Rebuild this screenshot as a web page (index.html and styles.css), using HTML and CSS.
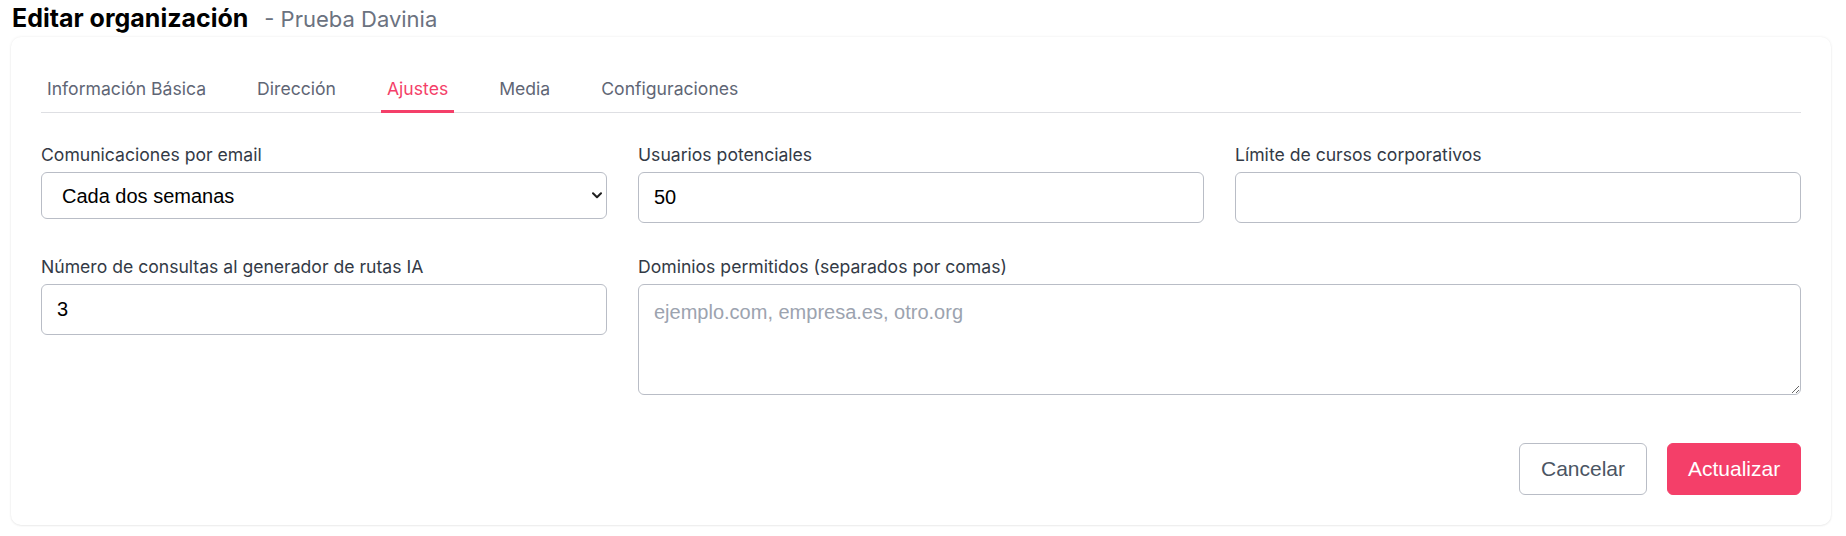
FILE: index.html
```html
<!DOCTYPE html>
<html lang="es">
<head>
<meta charset="utf-8">
<title>Editar organización</title>
<link rel="stylesheet" href="styles.css">
</head>
<body>
<div class="page">
  <h1 class="page-title">Editar organización <span class="page-sub">- Prueba Davinia</span></h1>
  <div class="card">
    <nav class="tabs">
      <button class="tab">Información Básica</button>
      <button class="tab">Dirección</button>
      <button class="tab active">Ajustes</button>
      <button class="tab">Media</button>
      <button class="tab">Configuraciones</button>
    </nav>
    <form class="form-grid">
      <div class="field">
        <label class="label">Comunicaciones por email</label>
        <div class="select-wrap">
          <select class="select">
            <option>Cada dos semanas</option>
          </select>
          <svg class="select-arrow" width="10" height="7" viewBox="0 0 10 7" aria-hidden="true"><polyline points="1,1.2 5,5.2 9,1.2" fill="none" stroke="#1f1f1f" stroke-width="2" stroke-linecap="round" stroke-linejoin="round"/></svg>
        </div>
      </div>
      <div class="field">
        <label class="label">Usuarios potenciales</label>
        <input class="input" type="text" value="50">
      </div>
      <div class="field">
        <label class="label">Límite de cursos corporativos</label>
        <input class="input" type="text" value="">
      </div>
      <div class="field">
        <label class="label">Número de consultas al generador de rutas IA</label>
        <input class="input" type="text" value="3">
      </div>
      <div class="field span-2">
        <label class="label">Dominios permitidos (separados por comas)</label>
        <textarea class="textarea" placeholder="ejemplo.com, empresa.es, otro.org"></textarea>
      </div>
    </form>
    <div class="actions">
      <button class="btn btn-outline">Cancelar</button>
      <button class="btn btn-primary">Actualizar</button>
    </div>
  </div>
</div>
</body>
</html>
```

FILE: styles.css
```css
* { box-sizing: border-box; }
html, body { margin: 0; padding: 0; background: #ffffff; }
body { font-family: Inter, "Liberation Sans", sans-serif; color: #111827; }

.page { padding: 3px 15px 10px 11px; }

.page-title {
  margin: 0 0 3px 1px;
  font-size: 25px;
  line-height: 30px;
  font-weight: 700;
  color: #000000;
}
.page-sub {
  margin-left: 10px;
  font-size: 22px;
  font-weight: 400;
  color: #6b7280;
}

.card {
  background: #ffffff;
  border-radius: 10px;
  box-shadow: 0 0 3px rgba(0, 0, 0, 0.08), 0 1px 2px rgba(0, 0, 0, 0.05);
  padding: 30px 30px 30px 30px;
}

.tabs {
  display: flex;
  gap: 39px;
  border-bottom: 1px solid #dedfe3;
}
.tab {
  font-family: Inter, sans-serif;
  font-size: 17.6px;
  line-height: 24px;
  color: #5f6675;
  background: none;
  border: none;
  border-bottom: 3px solid transparent;
  margin-bottom: -1px;
  padding: 10px 6px 9px;
  cursor: pointer;
}
.tab.active {
  color: #f43f69;
  border-bottom-color: #f43f69;
}

.form-grid {
  margin-top: 31px;
  display: grid;
  grid-template-columns: repeat(3, 1fr);
  column-gap: 31px;
  row-gap: 33px;
}
.span-2 { grid-column: span 2; }

.field { display: flex; flex-direction: column; }
.label {
  font-size: 17.6px;
  line-height: 22px;
  color: #333a46;
  margin-bottom: 6px;
}

.input, .select, .textarea {
  font-family: "Liberation Sans", Arial, sans-serif;
  font-size: 20px;
  color: #000000;
  border: 1px solid #b9bdc6;
  border-radius: 6px;
  background: #ffffff;
  outline: none;
}
.input {
  height: 51px;
  padding: 0 15px;
}
.select-wrap { position: relative; }
.select {
  width: 100%;
  height: 47px;
  padding: 0 24px 0 20px;
  appearance: none;
  -webkit-appearance: none;
}
.select-arrow {
  position: absolute;
  right: 5px;
  top: 20px;
  pointer-events: none;
}
.textarea {
  height: 111px;
  padding: 14px 15px;
  line-height: 26px;
  resize: vertical;
}
.textarea::placeholder { color: #9ca3af; }

.actions {
  margin-top: 48px;
  display: flex;
  justify-content: flex-end;
  gap: 20px;
}
.btn {
  height: 52px;
  font-family: "Liberation Sans", Arial, sans-serif;
  font-size: 21px;
  border-radius: 6px;
  padding: 0 20px;
  cursor: pointer;
}
.btn-outline {
  width: 128px;
  background: #ffffff;
  border: 1px solid #b9bdc6;
  color: #4b5563;
}
.btn-primary {
  width: 134px;
  background: #f43f69;
  border: 1px solid #f43f69;
  color: #ffffff;
}
```
